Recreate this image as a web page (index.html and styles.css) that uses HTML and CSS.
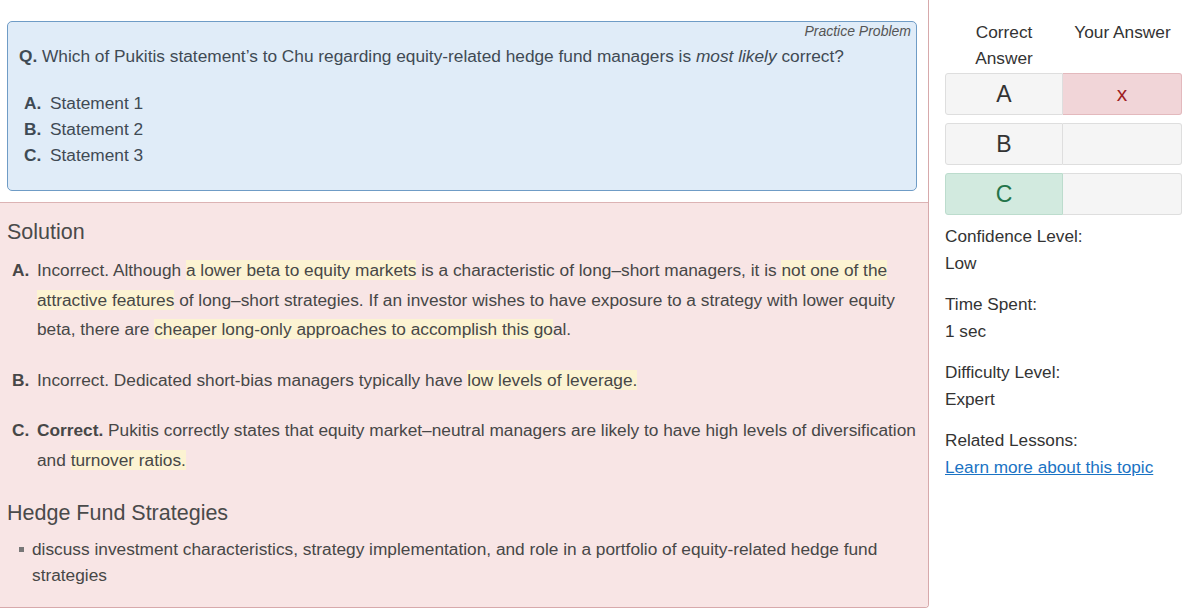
FILE: index.html
```html
<!DOCTYPE html>
<html lang="en">
<head>
<meta charset="utf-8">
<title>Practice Problem</title>
<link rel="stylesheet" href="styles.css">
</head>
<body>
<div class="page">
  <div class="main">
    <div class="question-wrap">
      <div class="question-box">
        <div class="tag">Practice Problem</div>
        <p class="question"><b>Q.</b> Which of Pukitis statement’s to Chu regarding equity-related hedge fund managers is <i>most likely</i> correct?</p>
        <ol class="options">
          <li><span class="opt-label">A.</span>Statement 1</li>
          <li><span class="opt-label">B.</span>Statement 2</li>
          <li><span class="opt-label">C.</span>Statement 3</li>
        </ol>
      </div>
    </div>
    <div class="solution">
      <h2 class="sol-heading">Solution</h2>
      <div class="sol-item">
        <span class="sol-label">A.</span>
        <p class="sol-text">Incorrect. Although <mark>a lower beta to equity markets</mark> is a characteristic of long–short managers, it is <mark>not one of the attractive features</mark> of long–short strategies. If an investor wishes to have exposure to a strategy with lower equity beta, there are <mark>cheaper long-only approaches to accomplish this go</mark>al.</p>
      </div>
      <div class="sol-item">
        <span class="sol-label">B.</span>
        <p class="sol-text">Incorrect. Dedicated short-bias managers typically have <mark>low levels of leverage.</mark></p>
      </div>
      <div class="sol-item">
        <span class="sol-label">C.</span>
        <p class="sol-text"><b>Correct.</b> Pukitis correctly states that equity market–neutral managers are likely to have high levels of diversification and <mark>turnover ratios.</mark></p>
      </div>
      <h2 class="lesson-heading">Hedge Fund Strategies</h2>
      <ul class="lesson-list">
        <li>discuss investment characteristics, strategy implementation, and role in a portfolio of equity-related hedge fund strategies</li>
      </ul>
    </div>
  </div>
  <aside class="sidebar">
    <div class="answer-grid">
      <div class="col-head">Correct Answer</div>
      <div class="col-head">Your Answer</div>
      <div class="cell letter">A</div>
      <div class="cell mark-wrong">x</div>
      <div class="cell letter">B</div>
      <div class="cell"></div>
      <div class="cell letter correct">C</div>
      <div class="cell"></div>
    </div>
    <dl class="stats">
      <div class="stat"><dt>Confidence Level:</dt><dd>Low</dd></div>
      <div class="stat"><dt>Time Spent:</dt><dd>1 sec</dd></div>
      <div class="stat"><dt>Difficulty Level:</dt><dd>Expert</dd></div>
      <div class="stat"><dt>Related Lessons:</dt><dd><a href="#" class="link">Learn more about this topic</a></dd></div>
    </dl>
  </aside>
</div>
</body>
</html>
```
FILE: styles.css
```css
* { box-sizing: border-box; }
html, body {
  margin: 0;
  padding: 0;
  background: #ffffff;
}
body {
  font-family: "Liberation Sans", Arial, Helvetica, sans-serif;
  color: #474747;
  width: 1200px;
  height: 616px;
  overflow: hidden;
}
.page {
  display: flex;
  align-items: flex-start;
}
.main {
  width: 929px;
  flex: none;
  border-right: 1px solid #d7a9ab;
  border-bottom: 1px solid #d7a9ab;
  border-bottom-right-radius: 4px;
  overflow: hidden;
}
.question-wrap {
  padding: 21px 11px 11px 7px;
}
.question-box {
  height: 170px;
  border: 1px solid #6f9cc6;
  border-radius: 5px;
  background: #e0ecf8;
  padding: 1px 5px 0 11px;
}
.tag {
  text-align: right;
  font-size: 14px;
  line-height: 16px;
  font-style: italic;
  color: #555;
}
.question {
  margin: 4px 0 0;
  font-size: 17.3px;
  line-height: 26px;
  color: #3f4a54;
}
.options {
  list-style: none;
  margin: 21px 0 0;
  padding: 0 0 0 5px;
  font-size: 17.3px;
  line-height: 26px;
  color: #3f4a54;
}
.opt-label {
  display: inline-block;
  width: 26px;
  font-weight: bold;
}
.solution {
  background: #f8e5e5;
  border-top: 1px solid #dcb3b4;
  padding: 16px 8px 19px 7px;
}
.sol-heading, .lesson-heading {
  margin: 0;
  font-weight: normal;
  font-size: 21.5px;
  line-height: 26px;
  color: #4a4a4a;
}
.sol-item {
  display: flex;
  margin: 11px 0 0 5px;
  font-size: 17.3px;
  line-height: 29.5px;
}
.sol-item + .sol-item { margin-top: 21px; }
.sol-label {
  flex: none;
  width: 25px;
  font-weight: bold;
}
.sol-text {
  margin: 0;
}
mark {
  background: #fcf3d2;
  color: inherit;
}
.lesson-heading { margin-top: 25px; }
.lesson-list {
  margin: 10px 0 0;
  padding: 0 0 0 25px;
  list-style: none;
  font-size: 17.3px;
  line-height: 26px;
}
.lesson-list li {
  position: relative;
}
.lesson-list li::before {
  content: "";
  position: absolute;
  left: -13px;
  top: 11px;
  width: 5px;
  height: 5px;
  background: #777;
}
.sidebar {
  margin-left: 16px;
  width: 240px;
  flex: none;
  color: #333;
}
.answer-grid {
  display: grid;
  grid-template-columns: 118px 119px;
  row-gap: 8px;
  padding-top: 19px;
}
.col-head {
  text-align: center;
  font-size: 17.3px;
  line-height: 26px;
  margin-bottom: -6px;
}
.cell {
  height: 42px;
  background: #f5f5f5;
  border: 1px solid #dedede;
  display: flex;
  align-items: center;
  justify-content: center;
  font-size: 23px;
  color: #333;
}
.cell:nth-child(odd) { border-radius: 3px 0 0 3px; }
.cell:nth-child(even) { border-radius: 0 3px 3px 0; border-left: none; }
.mark-wrong {
  background: #f1d5d8;
  border-color: #e3b9bd;
  color: #9e1f24;
  font-size: 21px;
  padding-top: 0;
}
.correct {
  background: #d2eadf;
  border-color: #bcdccd;
  color: #23744a;
}
.stats {
  margin: 8px 0 0 0;
  font-size: 17.2px;
  line-height: 27px;
}
.stat { margin-bottom: 14px; }
.stats dt, .stats dd { margin: 0; }
.link {
  color: #1a73c4;
  text-decoration: underline;
}
```
